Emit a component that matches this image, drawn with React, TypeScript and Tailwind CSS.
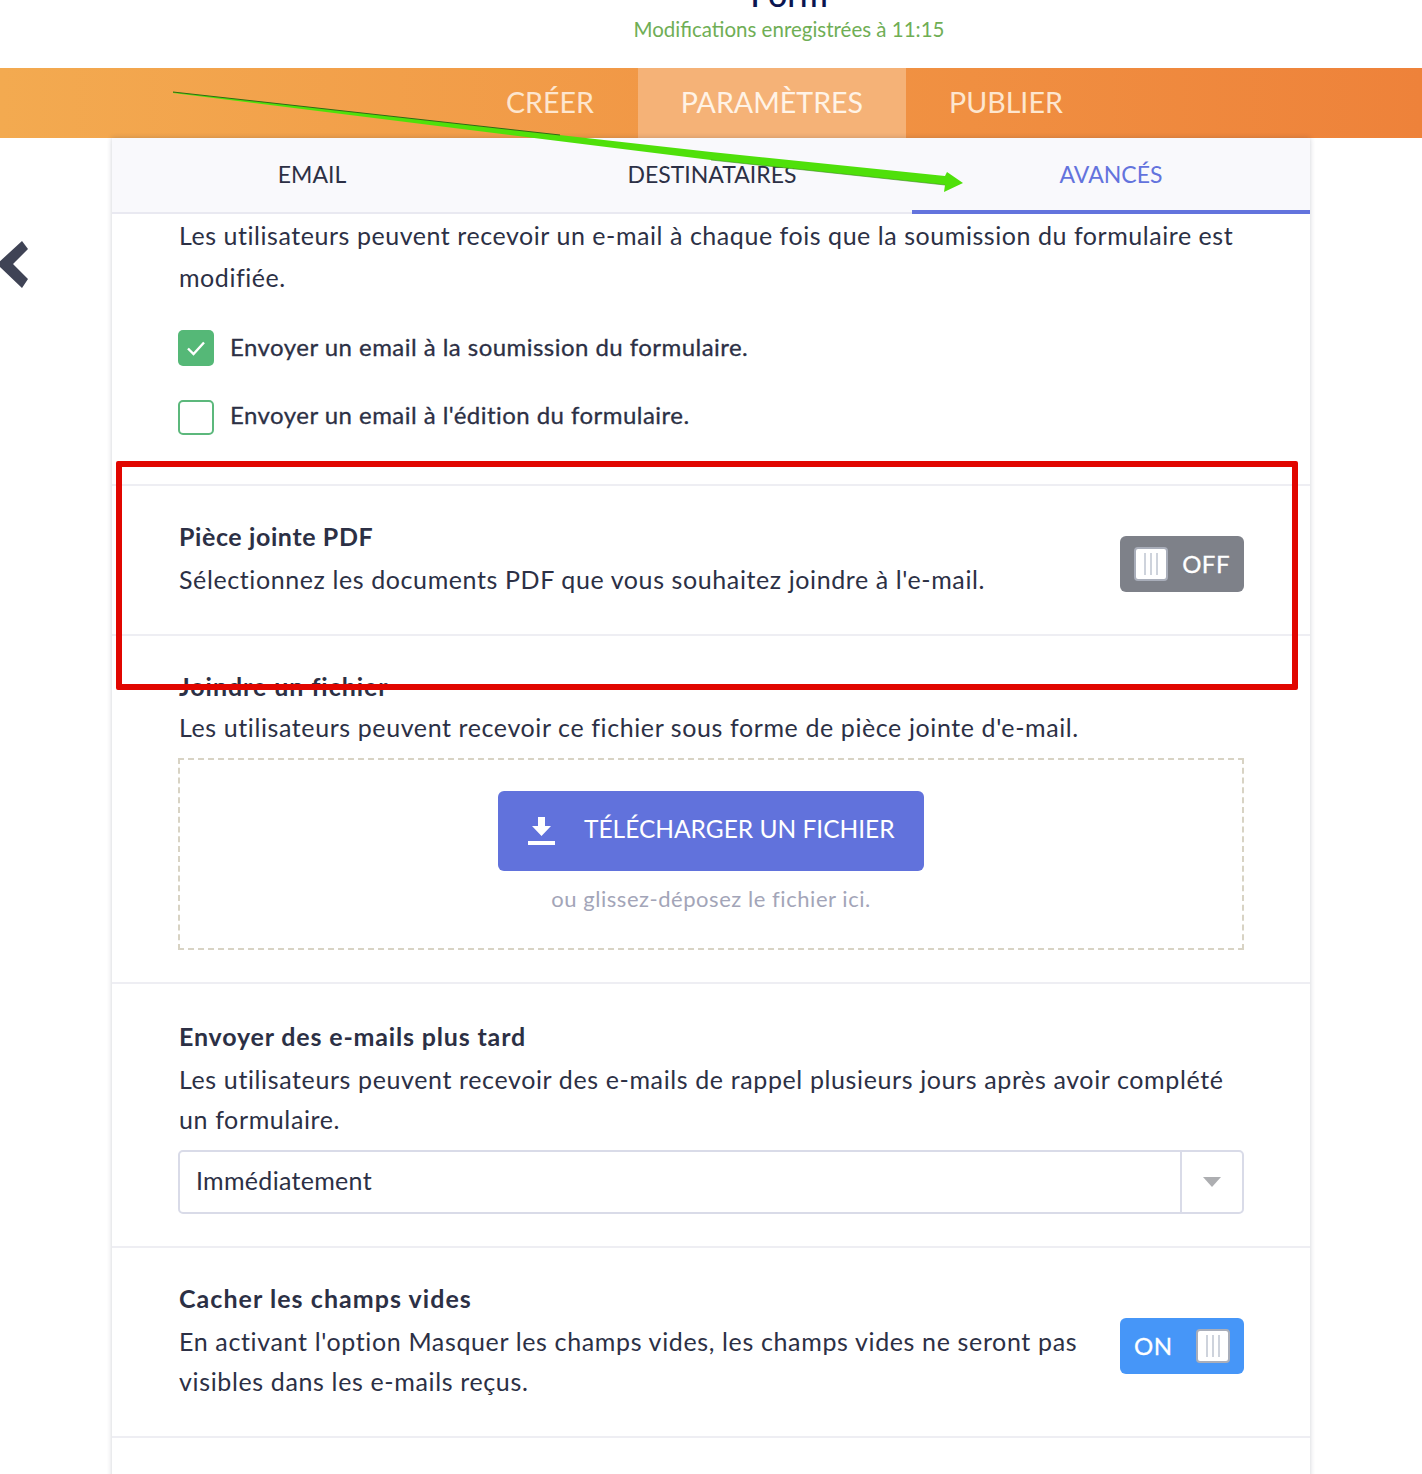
const FONT = "font-['Lato','Liberation_Sans',sans-serif]";

function Knob() {
  return (
    <span className="flex h-[34px] w-[34px] items-center justify-center gap-[4px] rounded-[4px] border-2 border-[#a9aeba] bg-white">
      <span className="h-[22px] w-[2px] bg-[#ced3dc]" />
      <span className="h-[22px] w-[2px] bg-[#ced3dc]" />
      <span className="h-[22px] w-[2px] bg-[#ced3dc]" />
    </span>
  );
}

function Toggle({ on }: { on: boolean }) {
  return (
    <div
      className={`flex h-[56px] w-[124px] shrink-0 items-center justify-between rounded-[6px] px-[14px] text-[24px] tracking-[0.5px] text-white [-webkit-text-stroke:0.3px] ${
        on ? "bg-[#4696f8]" : "bg-[#7e8189]"
      }`}
    >
      {on ? <span>ON</span> : <Knob />}
      {on ? <Knob /> : <span>OFF</span>}
    </div>
  );
}

export default function App() {
  return (
    <div className={`${FONT} relative h-[1474px] overflow-hidden bg-white text-[25px] tracking-[0.55px] text-[#2c3045]`}>
      <header className="h-[68px] overflow-hidden text-center tracking-normal">
        <div className="-mt-[22px] ml-[156px] text-[34px] font-medium leading-[32px] text-[#0a1551]">Form</div>
        <div className="mt-[6px] ml-[156px] text-[20.5px] leading-[26px] text-[#6fae55]">
          Modifications enregistrées à 11:15
        </div>
      </header>

      <nav className="flex h-[70px] bg-gradient-to-r from-[#f3aa50] to-[#ee823a] pl-[463px] text-[28.6px] leading-[68px] tracking-normal text-[#fde6cf]">
        <a className="block h-full w-[175px] pl-[43px]">CRÉER</a>
        <a className="block h-full w-[268px] bg-[#f5b277] text-center text-[#fff3e6]">PARAMÈTRES</a>
        <a className="block h-full px-[43px]">PUBLIER</a>
      </nav>

      <div className="flex">
        <div className="w-[112px] shrink-0 pt-[103px]">
          <svg viewBox="0 0 30 48" className="h-[48px] w-[30px] overflow-visible" fill="#3f4355">
            <path d="M22 0 28 8 13 23 28 38 22 47 -3 23Z" />
          </svg>
        </div>

        <main className="w-[1198px] shrink-0 bg-white shadow-[0_0_5px_rgba(40,45,70,0.22)]">
          <div className="flex h-[76px] border-b-2 border-[#e9e9f1] bg-[#f9f9fc] text-[23px] tracking-normal">
            <div className="flex w-[400px] items-center justify-center pb-[2px]">EMAIL</div>
            <div className="flex w-[400px] items-center justify-center pb-[2px]">DESTINATAIRES</div>
            <div className="-mb-[2px] flex w-[398px] items-center justify-center border-b-4 border-[#6373dd] text-[#6373dd]">
              AVANCÉS
            </div>
          </div>

          <section className="h-[272px] border-b-2 border-[#eeeef3] px-[67px]">
            <p className="leading-[42px]">
              Les utilisateurs peuvent recevoir un e-mail à chaque fois que la soumission du formulaire est modifiée.
            </p>
            <div className="mt-[32px] flex h-[36px] items-center gap-[16px] text-[24px] tracking-[0.46px] [-webkit-text-stroke:0.3px]">
              <span className="-ml-[1px] flex h-[36px] w-[36px] items-center justify-center rounded-[5px] bg-[#55b877]">
                <svg viewBox="0 0 20 20" className="h-[20px] w-[20px]" fill="none" stroke="#fff" strokeWidth="2.4">
                  <path d="M2 10.5 7.5 16 18 4.5" />
                </svg>
              </span>
              <span className="-mt-[2px]">Envoyer un email à la soumission du formulaire.</span>
            </div>
            <div className="mt-[33px] flex h-[36px] items-center gap-[16px] text-[24px] tracking-[0.46px] [-webkit-text-stroke:0.3px]">
              <span className="-ml-[1px] h-[35px] w-[36px] rounded-[5px] border-2 border-[#5cb87c]" />
              <span className="-mt-[4px]">Envoyer un email à l'édition du formulaire.</span>
            </div>
          </section>

          <section className="flex h-[150px] items-start justify-between border-b-2 border-[#eeeef3] pl-[67px] pr-[66px]">
            <div className="pt-[29px] leading-[42px]">
              <h3 className="font-bold leading-[43px] tracking-[0.6px]">Pièce jointe PDF</h3>
              <p className="tracking-[0.6px]">Sélectionnez les documents PDF que vous souhaitez joindre à l'e-mail.</p>
            </div>
            <div className="pt-[50px]">
              <Toggle on={false} />
            </div>
          </section>

          <section className="h-[348px] border-b-2 border-[#eeeef3] pl-[67px] pr-[66px]">
            <div className="pt-[31px] leading-[42px]">
              <h3 className="font-bold leading-[39px] tracking-[0.95px]">Joindre un fichier</h3>
              <p className="tracking-[0.6px]">Les utilisateurs peuvent recevoir ce fichier sous forme de pièce jointe d'e-mail.</p>
            </div>
            <div className="mt-[10px] -ml-[1px] flex h-[192px] flex-col items-center border-2 border-dashed border-[#d8d3c4] pt-[31px]">
              <button className="flex h-[80px] w-[426px] items-center gap-[29px] rounded-[6px] bg-[#6172dc] pl-[30px] text-[24.5px] tracking-normal text-white">
                <svg viewBox="0 0 27 28" className="h-[28px] w-[27px]" fill="#fff">
                  <path d="M10 0h7v9h6L13.5 19 4 9h6zM0 24h27v4H0z" />
                </svg>
                <span className="-mt-[4px]">TÉLÉCHARGER UN FICHIER</span>
              </button>
              <p className="mt-[13px] text-[22px] leading-[30px] text-[#a3a5b8]">ou glissez-déposez le fichier ici.</p>
            </div>
          </section>

          <section className="h-[264px] border-b-2 border-[#eeeef3] pl-[67px] pr-[66px]">
            <div className="pt-[30px] leading-[40px]">
              <h3 className="mb-[1px] font-bold leading-[44px] tracking-[0.83px]">Envoyer des e-mails plus tard</h3>
              <p className="tracking-[0.62px]">Les utilisateurs peuvent recevoir des e-mails de rappel plusieurs jours après avoir complété un formulaire.</p>
            </div>
            <div className="mt-[11px] -ml-[1px] flex h-[64px] items-center rounded-[5px] border-2 border-[#d9dbe8] tracking-[0.3px]">
              <span className="-mt-[2px] flex-1 pl-[16px]">Immédiatement</span>
              <span className="flex h-full w-[62px] items-center justify-center border-l-2 border-[#d9dbe8]">
                <span className="h-0 w-0 border-x-[9px] border-t-[10px] border-x-transparent border-t-[#adaeb1]" />
              </span>
            </div>
          </section>

          <section className="flex h-[190px] items-start justify-between gap-[40px] border-b-2 border-[#eeeef3] pl-[67px] pr-[66px]">
            <div className="pt-[28px] leading-[40px]">
              <h3 className="mb-[1px] font-bold leading-[44px] tracking-[1.05px]">Cacher les champs vides</h3>
              <p className="tracking-[0.64px]">En activant l'option Masquer les champs vides, les champs vides ne seront pas visibles dans les e-mails reçus.</p>
            </div>
            <div className="pt-[70px]">
              <Toggle on />
            </div>
          </section>
          <div className="h-[60px]" />
        </main>
      </div>

      {/* annotations drawn over the screenshot */}
      <div className="absolute left-[116px] top-[461px] h-[229px] w-[1182px] rounded-[2px] border-[6px] border-[#e10600]" />
      <svg className="absolute left-0 top-0 h-[200px] w-[1000px]" viewBox="0 0 1000 200">
        <path d="M173 92 711 152 945 176 947 172 963 183 944 192 945 185 711 160 173 93Z" fill="#4fe00a" />
        <path d="M173 92 560 135" stroke="#2f6b14" strokeWidth="1" fill="none" />
        <path d="M711 160 945 185" stroke="#3c8a20" strokeWidth="1" fill="none" opacity="0.6" />
      </svg>
    </div>
  );
}
